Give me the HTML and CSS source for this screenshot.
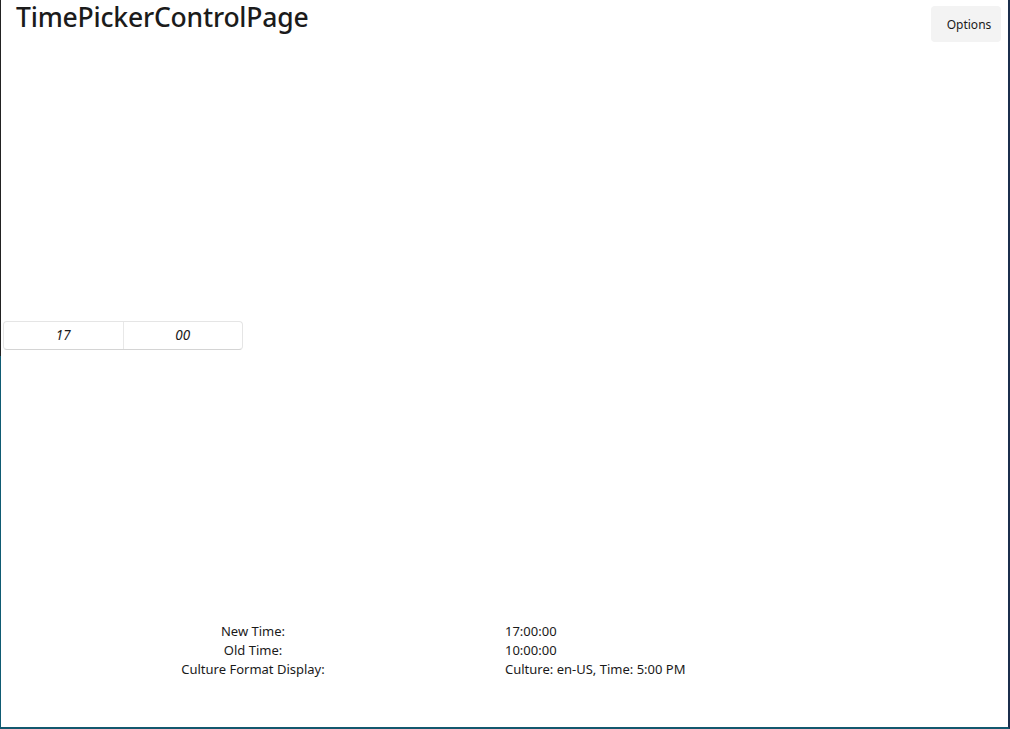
FILE: index.html
```html
<!DOCTYPE html>
<html lang="en">
<head>
<meta charset="utf-8">
<title>TimePickerControlPage</title>
<link rel="stylesheet" href="styles.css">
</head>
<body>
<div class="frame">
  <header class="header">
    <h1 class="title">TimePickerControlPage</h1>
    <button class="options">Options</button>
  </header>
  <main class="middle">
    <div class="picker">
      <div class="cell">17</div>
      <div class="cell">00</div>
    </div>
  </main>
  <section class="info">
    <div class="label">New Time:</div><div class="value">17:00:00</div>
    <div class="label">Old Time:</div><div class="value">10:00:00</div>
    <div class="label">Culture Format Display:</div><div class="value">Culture: en-US, Time: 5:00 PM</div>
  </section>
</div>
</body>
</html>
```

FILE: styles.css
```css
html, body {
  margin: 0;
  padding: 0;
  width: 1010px;
  height: 729px;
  overflow: hidden;
  background: #ffffff;
}
body {
  font-family: "Noto Sans", "Open Sans", sans-serif;
  color: #1a1a1a;
}
.frame {
  box-sizing: border-box;
  width: 1010px;
  height: 729px;
  display: flex;
  flex-direction: column;
  border-left: 1px solid transparent;
  border-right: 2px solid #1b2e4c;
  border-bottom: 2px solid #13586e;
  background:
    linear-gradient(#222222, #222222) left top / 1px 356px no-repeat,
    linear-gradient(#0f5b73, #0f5b73) left bottom / 1px 373px no-repeat,
    #ffffff;
  background-origin: border-box;
}
.header {
  height: 48px;
  display: flex;
  justify-content: space-between;
  align-items: flex-start;
  padding-left: 15px;
  padding-right: 7px;
}
.title {
  margin: 0;
  font-size: 26.5px;
  font-weight: 500;
  line-height: 34px;
  letter-spacing: -0.2px;
  color: #1b1b1b;
}
.options {
  margin-top: 6px;
  width: 70px;
  height: 36px;
  border: none;
  border-radius: 4px;
  background: #f3f3f3;
  font-family: "Noto Sans", "Open Sans", sans-serif;
  font-size: 12px;
  color: #1a1a1a;
  padding: 0 0 0 6px;
}
.middle {
  flex: 1;
  display: flex;
  align-items: center;
  padding-left: 2px;
}
.picker {
  box-sizing: border-box;
  width: 240px;
  height: 29px;
  display: flex;
  border: 1px solid #e5e5e5;
  border-bottom-color: #d4d4d4;
  border-radius: 4px;
  background: #ffffff;
}
.cell {
  flex: 1;
  display: flex;
  align-items: center;
  justify-content: center;
  font-style: italic;
  font-size: 13.5px;
  color: #1a1a1a;
}
.cell + .cell {
  border-left: 1px solid #e8e8e8;
}
.info {
  display: grid;
  grid-template-columns: 504px 1fr;
  grid-auto-rows: 19px;
  margin-bottom: 48px;
  font-size: 13px;
  line-height: 19px;
  color: #1a1a1a;
}
.label {
  text-align: center;
}
.value {
  padding-left: 0;
}
```
